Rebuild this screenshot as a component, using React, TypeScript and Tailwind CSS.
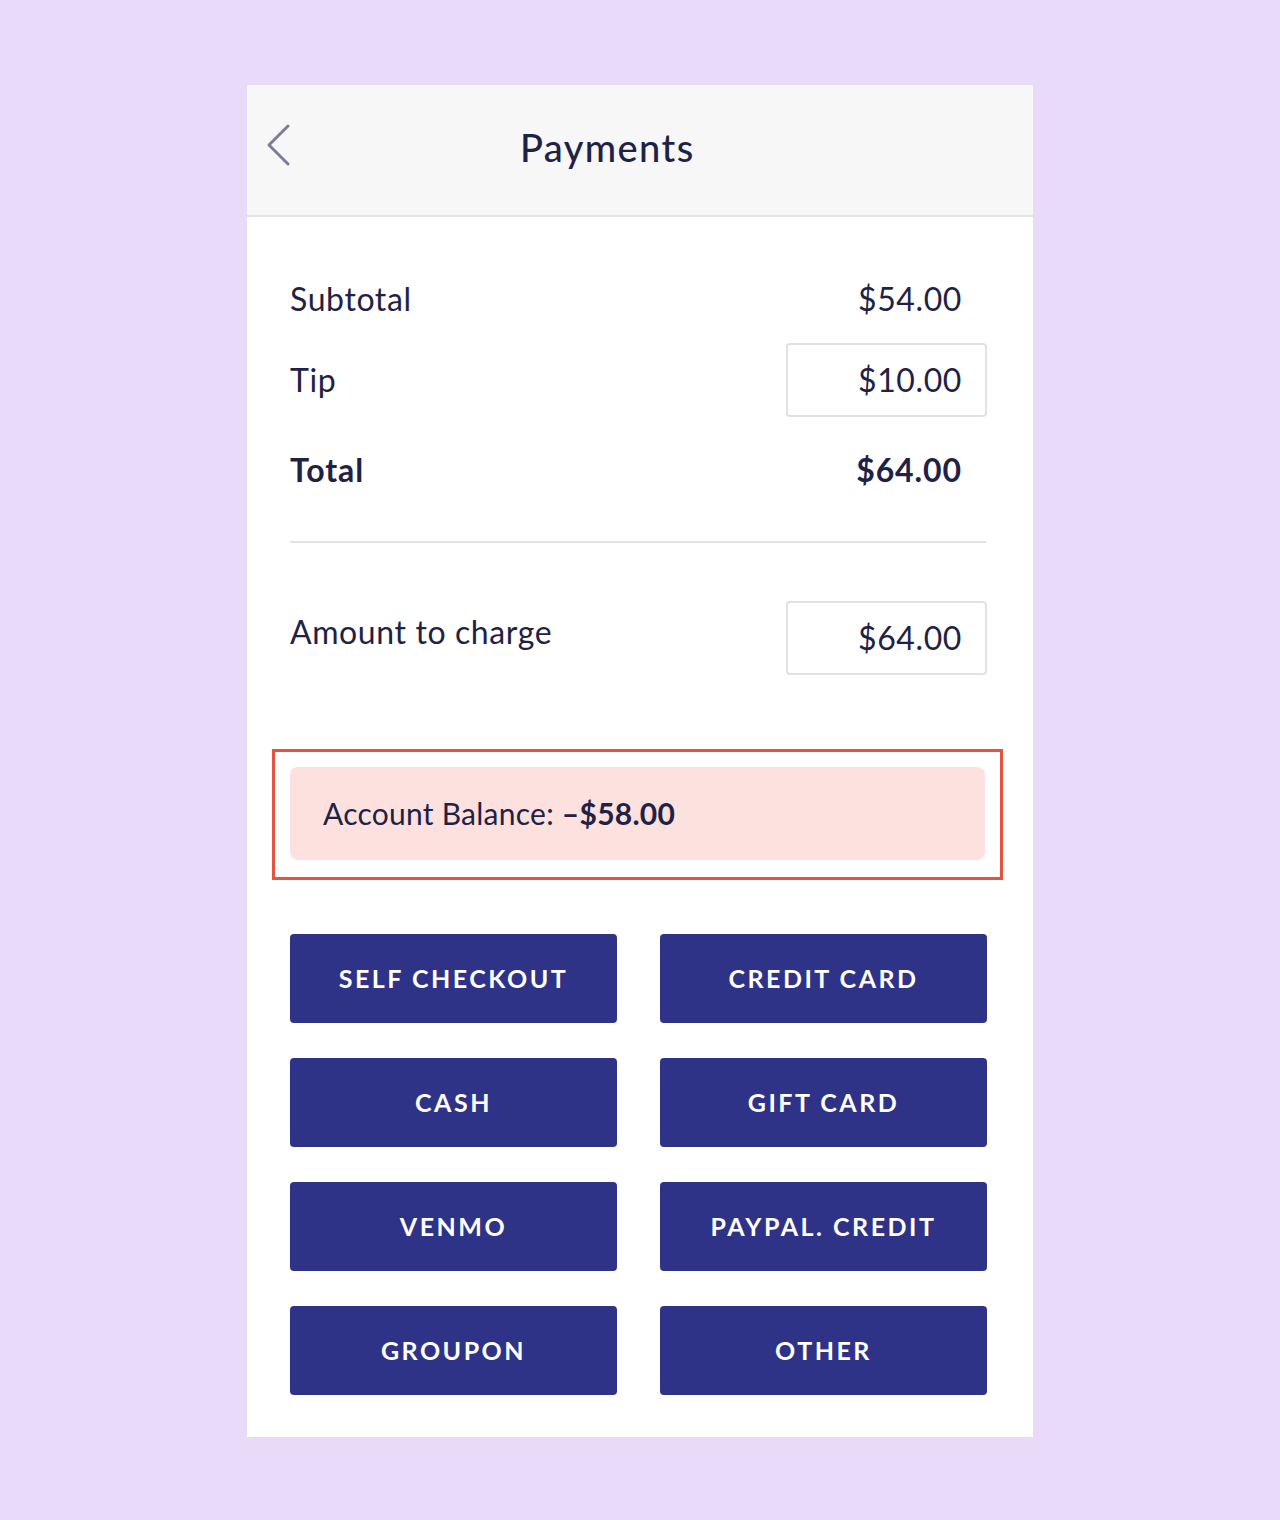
const methods = [
  "SELF CHECKOUT",
  "CREDIT CARD",
  "CASH",
  "GIFT CARD",
  "VENMO",
  "PAYPAL. CREDIT",
  "GROUPON",
  "OTHER",
];

function AmountBox({ value }: { value: string }) {
  return (
    <div className="w-[201px] h-[74px] border-2 border-[#e1e1e1] rounded-[4px] flex items-center justify-end pr-[23px] text-[32px] tracking-[0.6px]">
      {value}
    </div>
  );
}

export default function App() {
  return (
    <div className="min-h-[1520px] bg-[#e9dafa] pt-[85px] pb-[84px] font-['Lato',sans-serif] text-[#1f2245]">
      <div className="w-[786px] mx-auto bg-white">
        {/* header */}
        <div className="h-[132px] bg-[#f7f7f7] border-b-2 border-[#e3e3e3] flex items-center">
          <svg
            className="ml-[17px] -mt-[11px]"
            width="30"
            height="44"
            viewBox="0 0 30 44"
            fill="none"
          >
            <path
              d="M24 3 L5 22 L24 41"
              stroke="#7b7e9b"
              strokeWidth="3"
              strokeLinecap="round"
              strokeLinejoin="round"
            />
          </svg>
          <h1 className="ml-[226px] text-[38px] font-medium tracking-[1.4px] -mt-[6px]">
            Payments
          </h1>
        </div>

        <div className="pl-[43px] pr-[46px] pt-[45px] pb-[42px] text-[32px] tracking-[0.6px]">
          <div className="h-[74px] flex items-center justify-between">
            <span>Subtotal</span>
            <span className="pr-[25px]">$54.00</span>
          </div>
          <div className="mt-[7px] h-[74px] flex items-center justify-between">
            <span>Tip</span>
            <AmountBox value="$10.00" />
          </div>
          <div className="mt-[16px] h-[74px] flex items-center justify-between font-bold tracking-[0.9px]">
            <span>Total</span>
            <span className="pr-[25px]">$64.00</span>
          </div>

          <div className="mt-[34px] h-[2px] bg-[#e3e3e3] mr-[1px]" />

          <div className="mt-[58px] h-[74px] flex items-center justify-between">
            <span className="-mt-[12px]">Amount to charge</span>
            <AmountBox value="$64.00" />
          </div>

          <div className="mt-[74px] -ml-[18px] -mr-[16px] border-[3px] border-[#e8533f] px-[15px] pt-[15px] pb-[17px]">
            <div className="h-[93px] bg-[#fce1de] rounded-[8px] flex items-center pl-[33px] text-[30px] tracking-[0.25px]">
              Account Balance:&nbsp;<span className="font-bold">–$58.00</span>
            </div>
          </div>

          <div className="mt-[54px] grid grid-cols-2 gap-x-[43px] gap-y-[35px]">
            {methods.map((m) => (
              <button
                key={m}
                className="h-[89px] bg-[#2f3387] rounded-[4px] text-white text-[25px] font-bold tracking-[2.5px]"
              >
                {m}
              </button>
            ))}
          </div>
        </div>
      </div>
    </div>
  );
}
